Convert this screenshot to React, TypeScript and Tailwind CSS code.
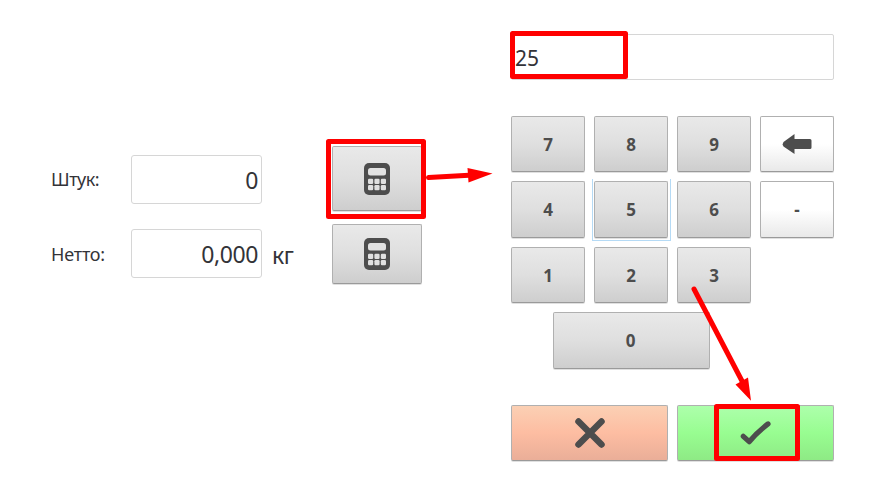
import type { ReactNode } from "react";

const BASE =
  "flex items-center justify-center rounded-[2px] border border-[#b0b0b0] border-b-[#9a9a9a] shadow-[0_1px_0_rgba(0,0,0,0.12)] text-[#4d4d4d] text-[17px] leading-none font-bold";
const GREY = "bg-linear-to-b from-[#e9e9e9] via-[#dfdfdf] to-[#cecece]";
const WHITE = "bg-linear-to-b from-white from-50% to-[#e9e9e9]";
const FIELD =
  "flex h-[49px] w-[131px] items-center justify-end rounded-[3px] border border-[#d6d6d6] pr-[3px] pt-[2px] text-[23px] tracking-[-0.4px]";

function Key({ className, children, label }: { className: string; children: ReactNode; label?: string }) {
  return (
    <button aria-label={label} className={`${BASE} ${className}`}>
      {children}
    </button>
  );
}

function Calculator() {
  return (
    <svg width="26" height="32" viewBox="0 0 26 32">
      <rect width="26" height="32" rx="5" fill="#4d4d4d" />
      <rect x="4" y="5" width="18" height="7.5" rx="2.5" fill="#e2e2e2" />
      {[4, 10.4, 16.8].map((x) =>
        [15.8, 22].map((y) => (
          <rect key={`${x}-${y}`} x={x} y={y} width="5.2" height="5.2" rx="1.2" fill="#e0e0e0" />
        )),
      )}
    </svg>
  );
}

function Annotations() {
  return (
    <svg className="pointer-events-none absolute inset-0" width="886" height="500" fill="none" stroke="#ff0000">
      <g strokeWidth="5" strokeLinejoin="round">
        <rect x="328.5" y="141.5" width="95" height="75" />
        <rect x="512.5" y="33.5" width="113" height="43" />
        <rect x="716.5" y="406.5" width="81" height="52" />
      </g>
      <g strokeWidth="5" strokeLinecap="round">
        <path d="M428.5 177.6 469 175.2M694 289l48 92" />
      </g>
      <path d="M467.5 168 492.5 173.4 468.5 182.5ZM748 377.5 751 400.8 735.5 384.5Z" fill="#ff0000" stroke="none" />
    </svg>
  );
}

export default function App() {
  return (
    <main className="relative flex h-[500px] w-[886px] overflow-hidden bg-white font-['Noto_Sans','Open_Sans',sans-serif] text-[#333338]">
      <section className="flex w-[460px] flex-col gap-[13px] pt-[146px] pl-[51px]">
        <div className="flex h-[65px] items-center">
          <span className="w-[80px] pt-[2px] text-[18px] tracking-[-0.5px]">Штук:</span>
          <div className={`${FIELD} mt-[2px]`}>0</div>
          <Key label="Калькулятор" className={`${GREY} ml-[70px] h-[65px] w-[90px]`}>
            <Calculator />
          </Key>
        </div>
        <div className="flex h-[60px] items-center">
          <span className="w-[80px] text-[18px] tracking-[-0.2px]">Нетто:</span>
          <div className={`${FIELD} mb-[2px]`}>0,000</div>
          <span className="w-[70px] pt-[2px] pl-[10px] text-[23px] tracking-[-0.4px]">кг</span>
          <Key label="Калькулятор" className={`${GREY} h-[60px] w-[90px]`}>
            <Calculator />
          </Key>
        </div>
      </section>

      <section className="ml-[51px] w-[323px] pt-[34px]">
        <div className="flex h-[46px] items-center rounded-[2px] border border-[#d6d6d6] pl-[3px] pt-[3px] text-[21px]">25</div>
        <div className="mt-[36px] grid grid-cols-4 grid-rows-[56px_57px_56px] gap-[9px]">
          <Key className={GREY}>7</Key>
          <Key className={GREY}>8</Key>
          <Key className={GREY}>9</Key>
          <Key label="Стереть" className={WHITE}>
            <svg width="30" height="20" viewBox="0 0 30 20" fill="#4d4d4d">
              <path d="M.5 10.5 1.5 8 12.5 0V5H28Q29.5 5 29.5 6.5V13.5Q29.5 15 28 15H12.5V20L1.5 12.5Z" />
            </svg>
          </Key>
          <Key className={GREY}>4</Key>
          <div className="relative flex">
            <Key className={`${GREY} w-full`}>5</Key>
            <span className="absolute -top-[2px] -right-[3px] -bottom-[3px] -left-[2px] border border-t-0 border-[#b5daf5]" />
          </div>
          <Key className={GREY}>6</Key>
          <Key className={WHITE}>-</Key>
          <Key className={GREY}>1</Key>
          <Key className={GREY}>2</Key>
          <Key className={GREY}>3</Key>
        </div>
        <Key className={`${GREY} mt-[9px] ml-[42px] h-[57px] w-[157px] pr-[2px]`}>0</Key>
        <div className="mt-[36px] flex h-[56px] gap-[9px]">
          <Key label="Отмена" className="w-[157px] bg-linear-to-b from-[#fbd0b4] via-[#fdbda2] to-[#eaae98]">
            <svg width="30" height="30" viewBox="0 0 30 30" fill="none" stroke="#4d4d4d" strokeWidth="6.5" strokeLinecap="round">
              <path d="M3.5 3.5 26.5 26.5M26.5 3.5 3.5 26.5" />
            </svg>
          </Key>
          <Key label="Принять" className="w-[157px] bg-linear-to-b from-[#adffab] via-[#98fd91] to-[#8eea85]">
            <svg width="31" height="24" viewBox="0 0 31 24" fill="none" stroke="#4d4d4d" strokeWidth="5.2" strokeLinecap="round" strokeLinejoin="round">
              <path d="M3.3 15.3 9.2 20.7Q17.5 11 28 2.9" />
            </svg>
          </Key>
        </div>
      </section>
      <Annotations />
    </main>
  );
}
